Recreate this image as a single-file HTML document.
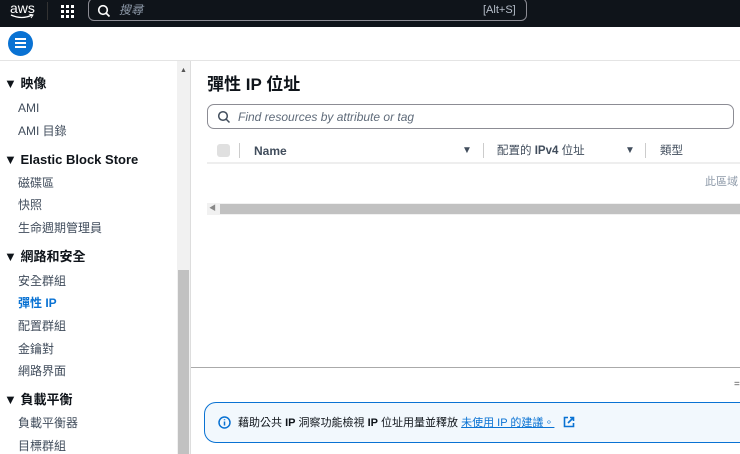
<!DOCTYPE html><html><head><meta charset="utf-8"><style>
*{margin:0;padding:0;box-sizing:border-box}
body{width:740px;height:454px;overflow:hidden;background:#fff;font-family:"Liberation Sans","Noto Sans CJK TC",sans-serif;color:#0f141a;position:relative}
.top{position:absolute;left:0;top:0;width:740px;height:27px;background:#0f141a}
.abs{position:absolute;line-height:16px;white-space:nowrap}
.side div{position:absolute;font-size:12px;color:#414d5c;line-height:16px;white-space:nowrap}
.side .h{font-weight:bold;font-size:13px;color:#0f141a}
</style></head><body>
<div class="top">
<div class="abs" style="left:10px;top:0px;color:#fff;font-size:14px">aws</div>
<svg class="abs" style="left:10px;top:14px" width="24" height="6"><path d="M1 1 Q12 6 22 1" stroke="#fff" stroke-width="1.3" fill="none"/><path d="M19 0 L23 1 L21 4" stroke="#fff" stroke-width="1" fill="none"/></svg>
<div class="abs" style="left:47px;top:2px;width:1px;height:18px;background:#333"></div>
<svg class="abs" style="left:61px;top:5px" width="14" height="14" fill="#fff"><rect x="0" y="0" width="3" height="3"/><rect x="5" y="0" width="3" height="3"/><rect x="10" y="0" width="3" height="3"/><rect x="0" y="5" width="3" height="3"/><rect x="5" y="5" width="3" height="3"/><rect x="10" y="5" width="3" height="3"/><rect x="0" y="10" width="3" height="3"/><rect x="5" y="10" width="3" height="3"/><rect x="10" y="10" width="3" height="3"/></svg>
<div class="abs" style="left:88px;top:-2px;width:439px;height:23px;border:1px solid #8c8c94;border-radius:6px"></div>
<svg class="abs" style="left:97px;top:4px" width="14" height="14"><circle cx="6" cy="6" r="4.3" stroke="#fff" stroke-width="1.6" fill="none"/><path d="M9 9 L12.5 12.5" stroke="#fff" stroke-width="1.6"/></svg>
<div class="abs" style="left:119px;top:2px;color:#8d99a8;font-size:12px;font-style:italic">搜尋</div>
<div class="abs" style="left:483px;top:2px;color:#b6bec9;font-size:11px">[Alt+S]</div>
</div>
<div class="abs" style="left:0;top:60px;width:740px;height:1px;background:#e4e4e4"></div>
<div class="abs" style="left:8px;top:31px;width:25px;height:25px;border-radius:50%;background:#0972d3"></div>
<div class="abs" style="left:15px;top:38px;width:11px;height:2px;background:#fff;box-shadow:0 4px 0 #fff,0 8px 0 #fff"></div>
<div class="side">
<div class="h" style="left:4px;top:76px">▼ 映像</div>
<div style="left:18px;top:100px">AMI</div>
<div style="left:18px;top:123px">AMI 目錄</div>
<div class="h" style="left:4px;top:152px">▼ Elastic Block Store</div>
<div style="left:18px;top:175px">磁碟區</div>
<div style="left:18px;top:197px">快照</div>
<div style="left:18px;top:220px">生命週期管理員</div>
<div class="h" style="left:4px;top:249px">▼ 網路和安全</div>
<div style="left:18px;top:273px">安全群組</div>
<div style="left:18px;top:295px;color:#0972d3;font-weight:bold">彈性 IP</div>
<div style="left:18px;top:318px">配置群組</div>
<div style="left:18px;top:341px">金鑰對</div>
<div style="left:18px;top:363px">網路界面</div>
<div class="h" style="left:4px;top:392px">▼ 負載平衡</div>
<div style="left:18px;top:415px">負載平衡器</div>
<div style="left:18px;top:438px">目標群組</div>
</div>
<div class="abs" style="left:177px;top:61px;width:13px;height:393px;background:#f1f1f1"></div>
<div class="abs" style="left:178px;top:270px;width:11px;height:184px;background:#c1c1c1"></div>
<div class="abs" style="left:180px;top:63px;font-size:7px;color:#555">▲</div>
<div class="abs" style="left:190px;top:61px;width:1px;height:393px;background:#ddd"></div>
<div class="abs" style="left:207px;top:75px;font-size:17px;font-weight:bold;line-height:20px">彈性 IP 位址</div>
<div class="abs" style="left:207px;top:104px;width:527px;height:25px;border:1px solid #8c8c94;border-radius:7px"></div>
<svg class="abs" style="left:217px;top:110px" width="14" height="14"><circle cx="6" cy="6" r="4.3" stroke="#414d5c" stroke-width="1.5" fill="none"/><path d="M9 9 L12.5 12.5" stroke="#414d5c" stroke-width="1.5"/></svg>
<div class="abs" style="left:238px;top:109px;font-size:12px;font-style:italic;color:#5f6b7a">Find resources by attribute or tag</div>
<div class="abs" style="left:217px;top:144px;width:13px;height:13px;border-radius:3px;background:#e0e0e0"></div>
<div class="abs" style="left:239px;top:143px;width:1px;height:15px;background:#ccc"></div>
<div class="abs" style="left:254px;top:143px;font-size:12px;font-weight:bold;color:#414d5c">Name</div>
<div class="abs" style="left:462px;top:143px;font-size:10px;color:#414d5c">▼</div>
<div class="abs" style="left:483px;top:143px;width:1px;height:15px;background:#ccc"></div>
<div class="abs" style="left:497px;top:143px;font-size:11.5px;color:#414d5c">配置的 <b>IPv4</b> 位址</div>
<div class="abs" style="left:625px;top:143px;font-size:10px;color:#414d5c">▼</div>
<div class="abs" style="left:645px;top:143px;width:1px;height:15px;background:#ccc"></div>
<div class="abs" style="left:660px;top:143px;font-size:11.5px;color:#414d5c">類型</div>
<div class="abs" style="left:207px;top:162px;width:533px;height:2px;background:#eee"></div>
<div class="abs" style="left:705px;top:174px;font-size:11px;color:#8d99a8">此區域</div>
<div class="abs" style="left:207px;top:203px;width:533px;height:12px;background:#f1f1f1"></div>
<div class="abs" style="left:220px;top:204px;width:520px;height:10px;background:#c1c1c1"></div>
<div class="abs" style="left:209px;top:201px;font-size:7px;color:#888">◀</div>
<div class="abs" style="left:191px;top:367px;width:549px;height:1px;background:#aaa"></div>
<div class="abs" style="left:734px;top:377px;font-size:10px;color:#555">=</div>
<div class="abs" style="left:204px;top:402px;width:550px;height:41px;border:1.5px solid #0972d3;border-radius:12px;background:#f2f8fd"></div>
<svg class="abs" style="left:218px;top:416px" width="13" height="13"><circle cx="6.5" cy="6.5" r="5.5" stroke="#0972d3" stroke-width="1.5" fill="none"/><path d="M6.5 5.5v4M6.5 3.2v1" stroke="#0972d3" stroke-width="1.5"/></svg>
<div class="abs" style="left:238px;top:415px;font-size:11px;color:#0f141a">藉助公共 <b>IP</b> 洞察功能檢視 <b>IP</b> 位址用量並釋放 <span style="color:#0972d3;text-decoration:underline">未使用 IP 的建議。</span></div>
<svg class="abs" style="left:563px;top:416px" width="12" height="12"><path d="M5 1.5H1.5v9h9V7" stroke="#0972d3" stroke-width="1.6" fill="none"/><path d="M7 1.5h3.5V5M10.5 1.5 5 7" stroke="#0972d3" stroke-width="1.6" fill="none"/></svg>
</body></html>
